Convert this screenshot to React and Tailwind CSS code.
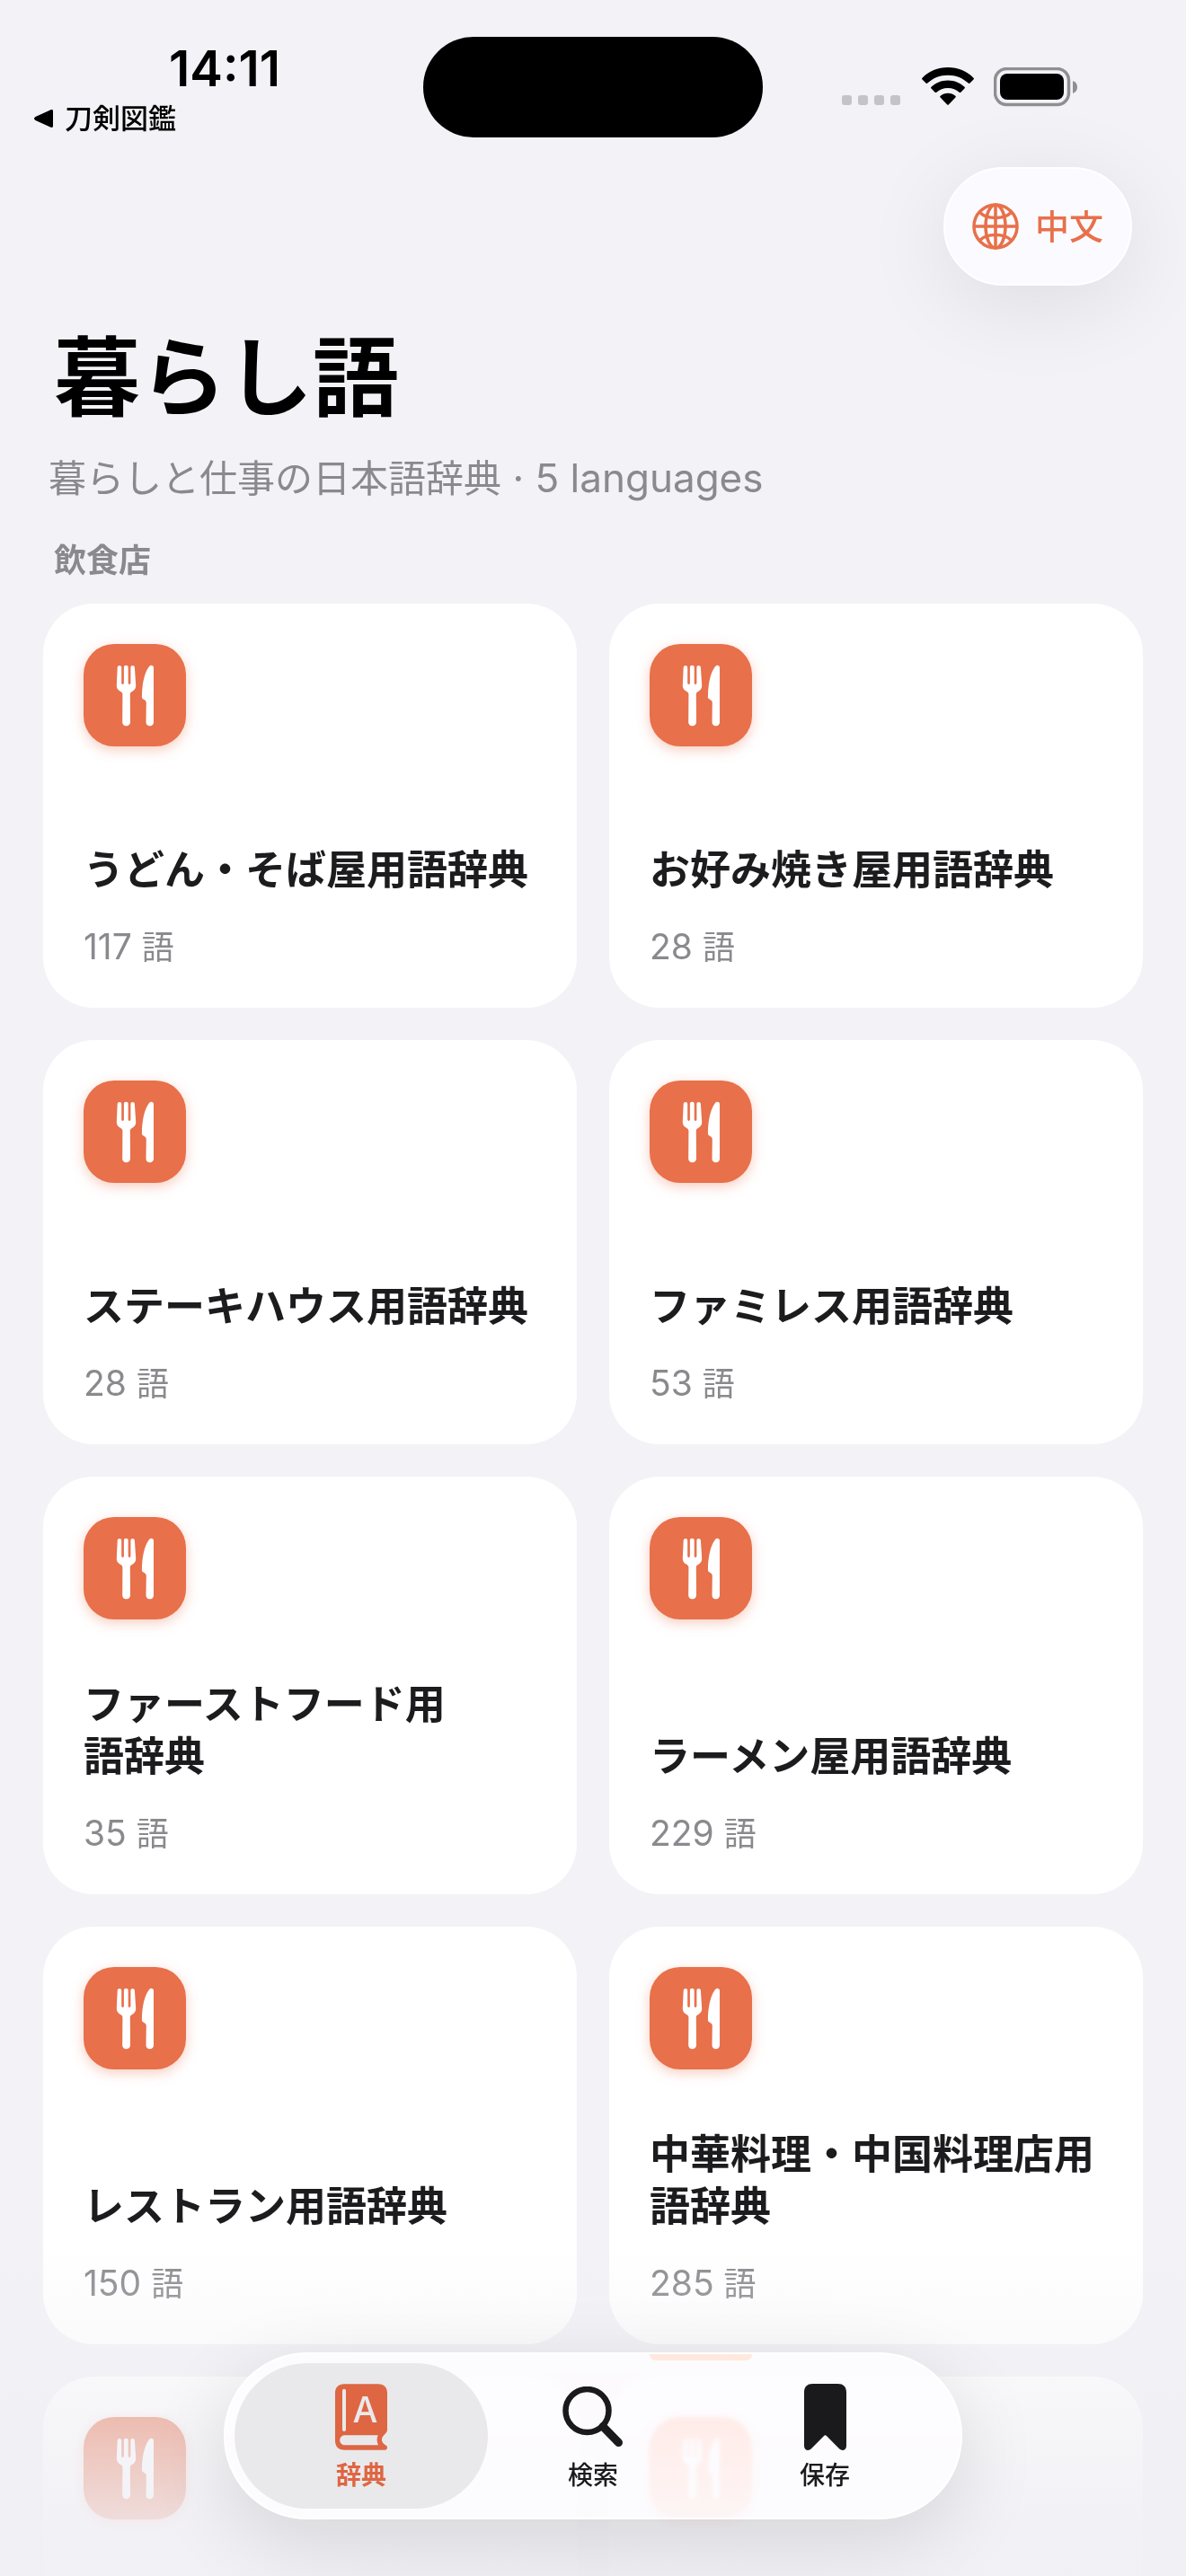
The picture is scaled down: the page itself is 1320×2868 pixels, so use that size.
import React from 'react';

const categories = [
  { title: 'うどん・そば屋用語辞典', count: 117 },
  { title: 'お好み焼き屋用語辞典', count: 28 },
  { title: 'ステーキハウス用語辞典', count: 28 },
  { title: 'ファミレス用語辞典', count: 53 },
  { title: 'ファーストフード用\n語辞典', count: 35 },
  { title: 'ラーメン屋用語辞典', count: 229 },
  { title: 'レストラン用語辞典', count: 150 },
  { title: '中華料理・中国料理店用\n語辞典', count: 285 },
];

const UtensilsIcon = () => (
  <svg viewBox="0 0 114 114" className="size-full" fill="#fff" aria-hidden="true">
    <path d="M40 24c1.300 0 2.200.9 2.200 2.200V43.500c0 1.900 2.700 1.900 2.700 0V26c0-1.300.9-2.200 2.400-2.200s2.400.9 2.400 2.200V43.500c0 1.900 2.700 1.900 2.700 0V26.200c0-1.300.9-2.200 2.200-2.200s2.200.9 2.300 2.200L58.200 46c.1 4.300-2.600 5.900-4.700 7.200-1.200.7-1.700 1.600-1.700 2.900L52 87c0 2.600-1.900 4.300-4.500 4.300S43.200 89.600 43.200 87l.2-30.900c0-1.300-.5-2.200-1.700-2.900-2.100-1.300-5-2.900-4.900-7.200l.9-19.800C37.800 24.900 38.700 24 40 24z" />
    <path d="M75.500 23.800c1.500 0 2.500 1 2.500 2.700V87c0 2.600-1.600 4.300-4.200 4.300S69.500 89.600 69.500 87l.3-21.500c0-1.300-.6-2.100-1.700-2.900l-2.200-1.700c-.8-.6-1-1.400-1-2.500.1-13.500 2.700-26 7.600-32.700 1-1.300 2-1.900 3-1.900z" />
  </svg>
);

const GlobeIcon = () => (
  <svg viewBox="0 0 52 52" className="size-[52px]" fill="none" stroke="currentColor" strokeWidth="3.500" aria-hidden="true">
    <circle cx="26" cy="26" r="24" />
    <ellipse cx="26" cy="26" rx="11" ry="24" />
    <path d="M26 2v48M2 26h48" />
    <path d="M8.500 10.500C12.500 14.500 19 16.500 26 16.500s13.500-2 17.500-6M8.500 41.500c4-4 10.500-6 17.500-6s13.500 2 17.500 6" />
  </svg>
);

const WifiIcon = () => (
  <svg viewBox="0 0 58 42" className="h-[42px] w-[58px]" aria-hidden="true">
    <path d="M29 0c11.200 0 21.300 4.400 28.500 11.700.6.600.6 1.200 0 1.800l-4 4.100c-.6.600-1.200.6-1.800 0C45.900 12 37.900 8.700 29 8.700S12.100 12 6.300 17.600c-.6.600-1.200.6-1.800 0l-4-4.100c-.6-.6-.6-1.200 0-1.800C7.700 4.400 17.800 0 29 0z" />
    <path d="M29 14.500c7.200 0 13.700 2.800 18.500 7.300.6.600.6 1.200 0 1.800l-4.100 4.100c-.6.600-1.200.5-1.800 0-3.300-3-7.700-4.800-12.600-4.800s-9.300 1.800-12.600 4.800c-.6.500-1.200.6-1.800 0l-4.100-4.100c-.6-.6-.6-1.200 0-1.800 4.800-4.500 11.300-7.300 18.500-7.300z" />
    <path d="M29 28.700c3.200 0 6.100 1.200 8.300 3.100.7.600.7 1.200.1 1.800L30 41.300c-.7.700-1.300.7-2 0l-7.400-7.700c-.6-.6-.6-1.200.1-1.800 2.200-1.900 5.100-3.100 8.300-3.100z" />
  </svg>
);

const BatteryIcon = () => (
  <svg viewBox="0 0 94 44" className="h-11 w-[94px]" aria-hidden="true">
    <rect x="1.500" y="1.500" width="82" height="40" rx="13" fill="none" stroke="#8f8f93" strokeWidth="3.500" />
    <rect x="7" y="7" width="71" height="29" rx="8" />
    <path d="M88 15c3.500 1.200 5 3.700 5 7s-1.500 5.800-5 7z" fill="#8f8f93" />
  </svg>
);

const BookIcon = () => (
  <svg viewBox="0 0 174 220" className="h-[74px] w-[58px]" aria-hidden="true">
    <path
      fill="currentColor"
      d="M30 0H144C163 0 174 11 174 30V152C174 158 171 162 167 166 152 179 152 193 167 203 172 206 174 208 174 212 174 217 171 220 166 220H32C11 220 0 209 0 188V30C0 11 11 0 30 0z"
    />
    <rect x="24" y="16" width="12" height="142" rx="6" fill="#e9e9eb" />
    <path fill="#e9e9eb" d="M33 171H143C138 182 139 193 144 204H33C10 204 10 171 33 171z" />
    <text x="100" y="127" textAnchor="middle" fontSize="118" fill="#e9e9eb" className="font-['Inter',sans-serif] font-medium">
      A
    </text>
  </svg>
);

const SearchIcon = () => (
  <svg viewBox="0 0 68 68" className="size-[68px]" fill="none" stroke="currentColor" aria-hidden="true">
    <circle cx="27.500" cy="27" r="24" strokeWidth="6.500" />
    <path d="M45 44.500 62.500 62.500" strokeWidth="9" strokeLinecap="round" />
  </svg>
);

const BookmarkIcon = () => (
  <svg viewBox="0 0 140 220" className="h-[74px] w-[47px]" fill="currentColor" aria-hidden="true">
    <path d="M28 0H112C130 0 140 10 140 28V206C140 220 126 224 117 216L75 173C71 169 69 169 65 173L23 216C14 224 0 220 0 206V28C0 10 10 0 28 0z" />
  </svg>
);

const tabs = [
  { label: '辞典', icon: BookIcon, active: true },
  { label: '検索', icon: SearchIcon },
  { label: '保存', icon: BookmarkIcon },
];

const StatusBar = () => (
  <div className="grid h-[186px] shrink-0 grid-cols-[1fr_378px_1fr] items-start">
    <div className="pt-11 pl-9">
      <p className="pl-[152px] text-[55px] leading-[64px] font-semibold">14:11</p>
      <a href="#back" className="mt-1 flex items-center gap-3 text-[31px] leading-10 font-medium">
        <svg viewBox="0 0 24 24" className="size-6" aria-hidden="true">
          <path d="M20 2.500C22 1.500 23 2 23 4V20c0 2-1 2.500-3 1.500L3.500 14c-2-1-2-3 0-4z" />
        </svg>
        刀剣図鑑
      </a>
    </div>
    <div className="mt-[41px] h-28 rounded-full bg-black" />
    <div className="flex items-end pt-[75px] pl-[88px]">
      <div className="mb-0.5 flex gap-[7px]">
        {[0, 1, 2, 3].map((n) => (
          <span key={n} className="size-[11px] rounded-[3px] bg-[#c4c4c8]" />
        ))}
      </div>
      <div className="ml-6 flex items-start gap-[22px]">
        <WifiIcon />
        <BatteryIcon />
      </div>
    </div>
  </div>
);

const CategoryCard = ({ title, count }) => (
  <a href="#category" className="flex min-h-[450px] flex-col rounded-[56px] bg-white px-[45px] pt-[45px] pb-[43px]">
    <span className="mb-[66px] block size-[114px] shrink-0 rounded-[34px] bg-[#e8704a] shadow-[0_4px_14px_rgba(232,112,74,0.35)]">
      <UtensilsIcon />
    </span>
    {title && (
      <>
        <h3 className="mt-auto text-[45px] leading-[58px] font-semibold whitespace-pre-line text-[#1c1c1e]">{title}</h3>
        <p className="mt-[30px] text-[39px] leading-[51px] text-[#8a8a8e]">
          {count} <span className="text-4xl">語</span>
        </p>
      </>
    )}
  </a>
);

const TabBar = () => (
  <nav className="absolute inset-x-0 bottom-[63px] mx-auto flex h-[186px] w-[822px] rounded-full border-2 border-white bg-[#fffeff]/75 px-[22px] py-2.5 shadow-[0_24px_90px_rgba(0,0,0,0.12)] backdrop-blur-[2px] backdrop-saturate-150">
    {/* Light caught on the upper rim of the glass */}
    <span className="absolute top-0 left-[472px] h-[7px] w-[114px] rounded-b-full bg-[#ffe8dd]" />
    {tabs.map(({ label, icon: Icon, active }) => (
      <button
        key={label}
        type="button"
        className={`relative flex flex-1 flex-col items-center pt-[23px] ${active ? 'text-[#de6643]' : 'text-[#1a1a1c]'}`}
      >
        {active && <span className="absolute -inset-x-3 inset-y-0 rounded-full bg-[#e9e9eb]" />}
        <span className="relative flex h-[74px] items-center">
          <Icon />
        </span>
        <span className={`relative mt-2 text-[28px] leading-10 ${active ? 'font-bold' : 'font-medium'}`}>{label}</span>
      </button>
    ))}
  </nav>
);

const App = () => (
  <div
    lang="ja"
    className="relative flex h-screen flex-col overflow-hidden bg-[#f2f2f7] font-['Inter','Noto_Sans_CJK_JP',sans-serif] text-black"
  >
    <StatusBar />

    <header className="shrink-0">
      <div className="flex justify-end px-[60px]">
        <button
          type="button"
          className="flex h-[132px] w-[210px] items-center justify-center gap-[18px] rounded-full border-2 border-white bg-[#fbfbff] text-[38px] font-medium text-[#e8704a] shadow-[0_20px_100px_rgba(0,0,0,0.09)]"
        >
          <GlobeIcon />
          中文
        </button>
      </div>
      <h1 className="mt-10 px-[60px] text-8xl leading-[124px] font-bold">暮らし語</h1>
      <p className="mt-5 px-[54px] text-[42px] leading-[60px] text-[#8a8a8e]">
        暮らしと仕事の日本語辞典<span className="text-[44px]"> · 5 languages</span>
      </p>
    </header>

    <main className="px-12 pt-[37px]">
      <h2 className="px-3 text-4xl leading-[48px] font-semibold text-[#8a8a8e]">飲食店</h2>
      <div className="mt-6 grid grid-cols-2 gap-9">
        {categories.map((c) => (
          <CategoryCard key={c.title} {...c} />
        ))}
        {/* the row that peeks out under the tab bar */}
        <CategoryCard />
        <CategoryCard />
      </div>
    </main>

    {/* Fade the list out behind the tab bar */}
    <div className="pointer-events-none absolute inset-x-0 bottom-0 h-[370px] bg-[linear-gradient(to_bottom,#f0eff400,#f0eff44d_30%,#f0eff499_52%,#f0eff4d9_83%,#f0eff4e6)]" />
    <TabBar />
  </div>
);

export default App;
